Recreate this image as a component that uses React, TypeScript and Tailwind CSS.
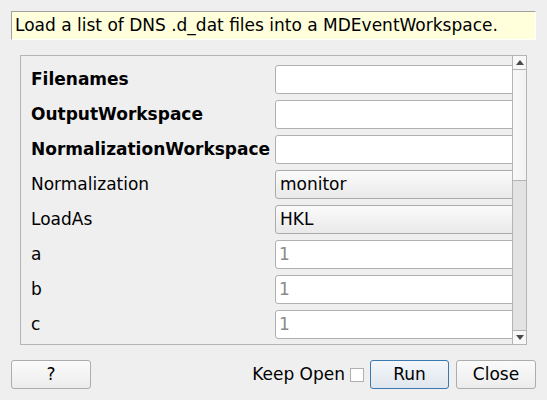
import React from "react";

type Row = {
  label: string;
  bold?: boolean;
  kind: "text" | "combo";
  value?: string;
  placeholder?: string;
};

const rows: Row[] = [
  { label: "Filenames", bold: true, kind: "text" },
  { label: "OutputWorkspace", bold: true, kind: "text" },
  { label: "NormalizationWorkspace", bold: true, kind: "text" },
  { label: "Normalization", kind: "combo", value: "monitor" },
  { label: "LoadAs", kind: "combo", value: "HKL" },
  { label: "a", kind: "text", placeholder: "1" },
  { label: "b", kind: "text", placeholder: "1" },
  { label: "c", kind: "text", placeholder: "1" },
];

const Field: React.FC<{ row: Row }> = ({ row }) => {
  if (row.kind === "combo") {
    return (
      <div className="h-[29px] w-[260px] shrink-0 rounded-[3px] border border-[#ababab] bg-gradient-to-b from-[#fbfbfb] to-[#e9e9e9] px-[4px] flex items-center">
        {row.value}
      </div>
    );
  }
  return (
    <div className="h-[29px] w-[260px] shrink-0 rounded-[3px] border border-[#b0b0b0] bg-white px-[3px] flex items-center text-[#8a8a8a]">
      {row.placeholder}
    </div>
  );
};

const Arrow: React.FC<{ up?: boolean }> = ({ up }) => (
  <svg width="8" height="5" viewBox="0 0 8 5">
    {up ? (
      <path d="M0 5 L4 0 L8 5 Z" fill="#4a4a4a" />
    ) : (
      <path d="M0 0 L8 0 L4 5 Z" fill="#4a4a4a" />
    )}
  </svg>
);

const Button: React.FC<{ label: string; width: string; primary?: boolean }> = ({
  label,
  width,
  primary,
}) => (
  <div
    className={
      primary
        ? `${width} h-[29px] rounded-[3px] border border-[#3b78b0] bg-gradient-to-b from-[#f4f7fa] to-[#dfe6ed] flex items-center justify-center`
        : `${width} h-[29px] rounded-[3px] border border-[#adadad] bg-gradient-to-b from-[#fbfbfb] to-[#ececec] flex items-center justify-center`
    }
  >
    {label}
  </div>
);

export default function App() {
  return (
    <div
      className="w-[547px] h-[400px] bg-[#efefef] text-black text-[17px] overflow-hidden flex flex-col"
      style={{ fontFamily: '"DejaVu Sans", sans-serif' }}
    >
      <div className="mt-[11px] mx-[11px] h-[29px] border-t border-l border-[#a0a0a0] border-r border-b border-r-white border-b-white bg-[#ffffdc] pl-[3px] pt-[1px] flex items-center">
        Load a list of DNS .d_dat files into a MDEventWorkspace.
      </div>

      <div className="mt-[15px] ml-[20px] w-[507px] h-[290px] border border-[#b4b4b4] flex">
        <div className="flex-1 overflow-hidden pt-[9px] pl-[10px] flex flex-col gap-[6px]">
          {rows.map((row) => (
            <div key={row.label} className="flex items-center h-[29px] shrink-0">
              <div className={`w-[244px] shrink-0 whitespace-nowrap ${row.bold ? "font-bold" : ""}`}>
                {row.label}
              </div>
              <Field row={row} />
            </div>
          ))}
        </div>
        <div className="w-[14px] border-l border-[#b4b4b4] flex flex-col">
          <div className="h-[14px] border-b border-[#b4b4b4] bg-[#f7f7f7] flex items-center justify-center">
            <Arrow up />
          </div>
          <div className="h-[110px] bg-gradient-to-r from-[#f8f8f8] to-[#f2f2f2]" />
          <div className="flex-1 border-t border-b border-[#b4b4b4] bg-[#e3e3e3]" />
          <div className="h-[13px] bg-[#f7f7f7] flex items-center justify-center">
            <Arrow />
          </div>
        </div>
      </div>

      <div className="mt-[15px] mx-[11px] flex items-center">
        <Button label="?" width="w-[80px]" />
        <div className="flex-1" />
        <span className="mr-[5px]">Keep Open</span>
        <div className="w-[14px] h-[14px] border border-[#b0b0b0] bg-white mr-[6px]" />
        <Button label="Run" width="w-[79px]" primary />
        <div className="w-[7px]" />
        <Button label="Close" width="w-[80px]" />
      </div>
    </div>
  );
}
